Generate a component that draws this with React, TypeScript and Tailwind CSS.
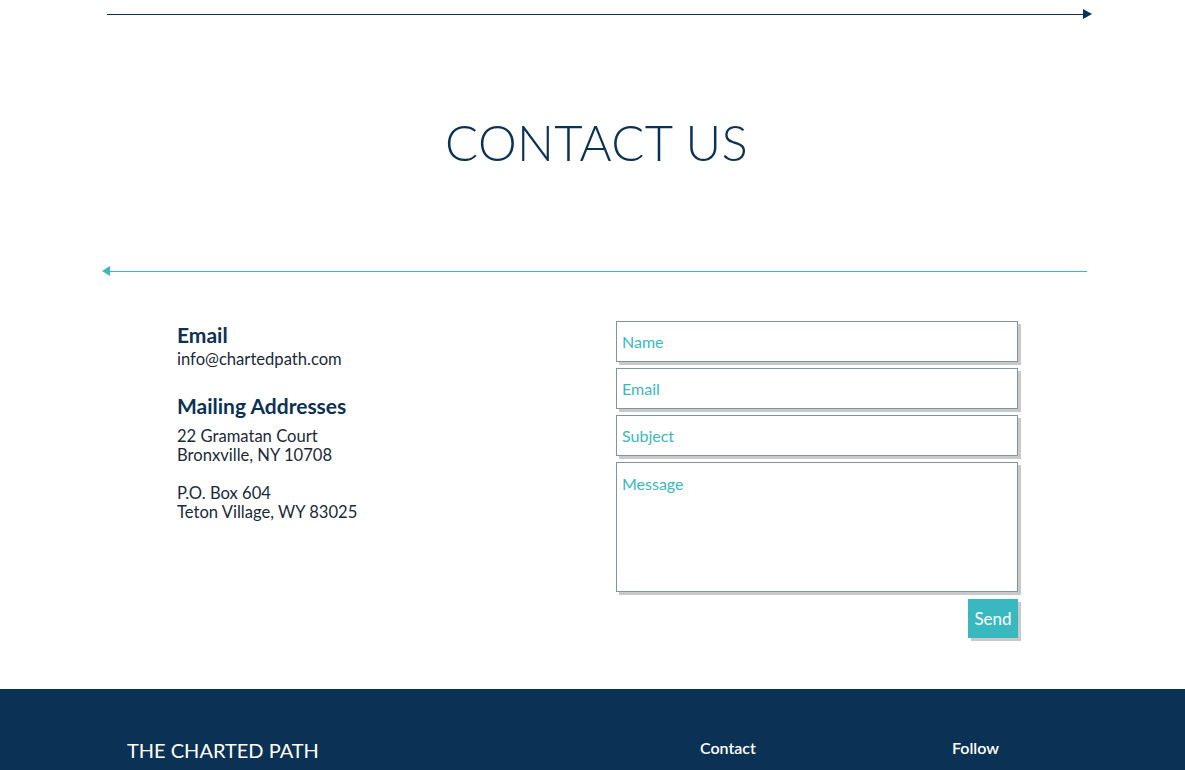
const font = { fontFamily: "Lato, 'Open Sans', sans-serif" };

function ArrowRule({ direction }: { direction: "left" | "right" }) {
  if (direction === "right") {
    return (
      <div className="flex items-center pl-[107px] pr-[93px]">
        <div className="h-px flex-1 bg-[#0b3254]" />
        <svg width="9" height="10" viewBox="0 0 9 10" className="shrink-0">
          <path d="M0 0 L9 5 L0 10 Z" fill="#0b3254" />
        </svg>
      </div>
    );
  }
  return (
    <div className="flex items-center pl-[102px] pr-[98px]">
      <svg width="8" height="10" viewBox="0 0 8 10" className="shrink-0">
        <path d="M8 0 L0 5 L8 10 Z" fill="#3ab8c0" />
      </svg>
      <div className="h-px flex-1 bg-[#3ab8c0]" />
    </div>
  );
}

const fieldClass =
  "block w-full border border-[#7f93a5] bg-white px-[5px] text-[16px] text-[#3ab8c0] placeholder:text-[#3ab8c0] shadow-[3px_3px_0_#c9c9c9] outline-none";

export default function App() {
  return (
    <div className="min-h-screen bg-white" style={font}>
      <div className="pt-[9px]">
        <ArrowRule direction="right" />
      </div>

      <h1 className="mt-[93px] pl-[8px] text-center text-[49px] font-light leading-[60px] tracking-[0.3px] text-[#0b3254]">
        CONTACT US
      </h1>

      <div className="mt-[94px]">
        <ArrowRule direction="left" />
      </div>

      <section className="mt-[45px] flex pl-[177px]">
        <div className="w-[439px] pt-[2px] text-[#0b3254]">
          <h3 className="text-[21px] font-bold leading-[24px]">Email</h3>
          <p className="mt-[3px] text-[16.6px] leading-[19px] text-[#1a2a3a]">info@chartedpath.com</p>

          <h3 className="mt-[25px] text-[21px] font-bold leading-[24px]">Mailing Addresses</h3>
          <p className="mt-[9px] text-[16.6px] leading-[19px] text-[#1a2a3a]">
            22 Gramatan Court
            <br />
            Bronxville, NY 10708
          </p>
          <p className="mt-[19px] text-[16.6px] leading-[19px] text-[#1a2a3a]">
            P.O. Box 604
            <br />
            Teton Village, WY 83025
          </p>
        </div>

        <form className="flex w-[402px] flex-col gap-[6px]" onSubmit={(e) => e.preventDefault()}>
          <input className={`${fieldClass} h-[41px]`} placeholder="Name" style={font} />
          <input className={`${fieldClass} h-[41px]`} placeholder="Email" style={font} />
          <input className={`${fieldClass} h-[41px]`} placeholder="Subject" style={font} />
          <textarea className={`${fieldClass} h-[130px] resize-none pt-[9px]`} placeholder="Message" style={font} />
          <div className="mt-[1px] flex justify-end">
            <button
              type="submit"
              className="h-[39px] w-[50px] bg-[#3ab8c0] text-[17px] text-white shadow-[3px_3px_0_#c9c9c9]"
              style={font}
            >
              Send
            </button>
          </div>
        </form>
      </section>

      <footer className="mt-[51px] h-[120px] bg-[#0b3254] text-white">
        <div className="flex pt-[49px]">
          <div className="w-[700px] pl-[127px] text-[20px] leading-[24px]">THE CHARTED PATH</div>
          <div className="w-[252px] text-[16px] font-semibold leading-[20px]">Contact</div>
          <div className="text-[16px] font-semibold leading-[20px]">Follow</div>
        </div>
      </footer>
    </div>
  );
}
